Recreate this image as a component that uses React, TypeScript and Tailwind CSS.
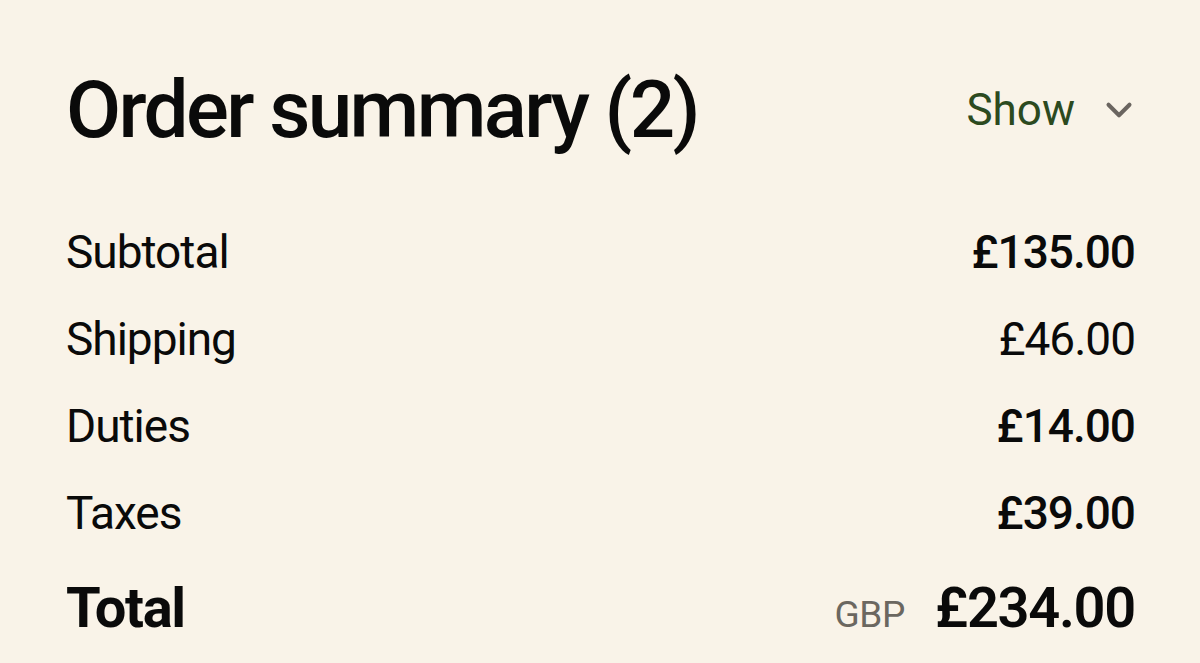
import { ChevronDown } from "lucide-react";
import React from "react";

interface LineProps {
  label: string;
  amount: string;
  bold?: boolean;
}

const Line = ({ label, amount, bold }: LineProps) => (
  <div className="flex items-center justify-between h-[60px]">
    <span>{label}</span>
    <span className={bold ? "font-medium" : ""}>{amount}</span>
  </div>
);

const App = () => {
  const lines: LineProps[] = [
    { label: "Subtotal", amount: "£135.00", bold: true },
    { label: "Shipping", amount: "£46.00" },
    { label: "Duties", amount: "£14.00", bold: true },
    { label: "Taxes", amount: "£39.00", bold: true },
  ];

  return (
    <div className="w-[1200px] h-[663px] overflow-hidden bg-[#f9f3e8] text-[#0a0a0a] font-['Roboto',sans-serif] pt-[62px] pl-[66px] pr-[65px]">
      {/* header */}
      <div className="flex items-center justify-between h-[96px]">
        <h1 className="text-[80px] leading-[96px] font-medium tracking-[-2.6px]">
          Order summary (2)
        </h1>
        <button className="flex items-center gap-[23px] -mr-[5px] text-[#2c4a1f] text-[44px] leading-[60px]">
          Show
          <ChevronDown size={42} strokeWidth={2.3} className="text-[#6b6560]" />
        </button>
      </div>

      {/* cost lines */}
      <div className="mt-[64px] flex flex-col gap-[27px] text-[46px] leading-[60px] tracking-[-1px]">
        {lines.map((l) => (
          <Line key={l.label} {...l} />
        ))}
      </div>

      {/* total */}
      <div className="mt-[31px] flex items-baseline justify-between h-[68px] text-[56px] leading-[68px] font-bold tracking-[-1.3px]">
        <span>Total</span>
        <span className="flex items-baseline gap-[30px]">
          <span className="text-[37px] font-normal tracking-[-0.3px] text-[#6b6760]">GBP</span>
          <span className="font-semibold">£234.00</span>
        </span>
      </div>
    </div>
  );
};

export default App;
